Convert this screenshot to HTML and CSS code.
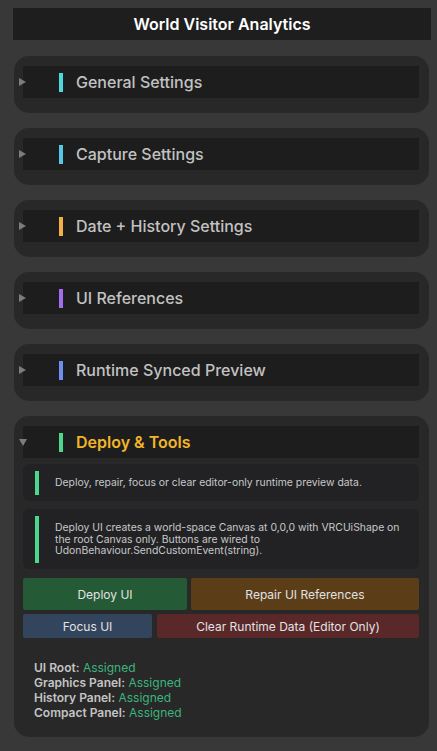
FILE: index.html
```html
<!DOCTYPE html>
<html lang="en">
<head>
    <meta charset="UTF-8">
    <meta name="viewport" content="width=device-width, initial-scale=1.0">
    <title>World Visitor Analytics</title>
    <link rel="stylesheet" href="styles.css">
</head>
<body>
    <div class="inspector">
        <div class="title-bar">World Visitor Analytics</div>

        <div class="foldout">
            <span class="arrow"></span>
            <div class="foldout-header">
                <span class="accent cyan"></span>
                <span class="foldout-title">General Settings</span>
            </div>
        </div>

        <div class="foldout">
            <span class="arrow"></span>
            <div class="foldout-header">
                <span class="accent sky"></span>
                <span class="foldout-title">Capture Settings</span>
            </div>
        </div>

        <div class="foldout">
            <span class="arrow"></span>
            <div class="foldout-header">
                <span class="accent orange"></span>
                <span class="foldout-title">Date + History Settings</span>
            </div>
        </div>

        <div class="foldout">
            <span class="arrow"></span>
            <div class="foldout-header">
                <span class="accent purple"></span>
                <span class="foldout-title">UI References</span>
            </div>
        </div>

        <div class="foldout">
            <span class="arrow"></span>
            <div class="foldout-header">
                <span class="accent blue"></span>
                <span class="foldout-title">Runtime Synced Preview</span>
            </div>
        </div>

        <div class="foldout open">
            <span class="arrow down"></span>
            <div class="foldout-header">
                <span class="accent green"></span>
                <span class="foldout-title active">Deploy &amp; Tools</span>
            </div>

            <div class="help-box first">
                <span class="help-bar"></span>
                <p>Deploy, repair, focus or clear editor-only runtime preview data.</p>
            </div>

            <div class="help-box">
                <span class="help-bar"></span>
                <p>Deploy UI creates a world-space Canvas at 0,0,0 with VRCUiShape on the root Canvas only. Buttons are wired to UdonBehaviour.SendCustomEvent(string).</p>
            </div>

            <div class="button-row big">
                <button class="btn btn-deploy">Deploy UI</button>
                <button class="btn btn-repair">Repair UI References</button>
            </div>
            <div class="button-row small">
                <button class="btn btn-focus">Focus UI</button>
                <button class="btn btn-clear">Clear Runtime Data (Editor Only)</button>
            </div>

            <div class="status">
                <div><b>UI Root:</b> <span class="ok">Assigned</span></div>
                <div><b>Graphics Panel:</b> <span class="ok">Assigned</span></div>
                <div><b>History Panel:</b> <span class="ok">Assigned</span></div>
                <div><b>Compact Panel:</b> <span class="ok">Assigned</span></div>
            </div>
        </div>
    </div>
</body>
</html>
```

FILE: styles.css
```css
body {
    background-color: #383838; /* Unity dark inspector */
    color: #c4c4c4;
    font-family: Inter, "Noto Sans", sans-serif;
    margin: 0;
    padding: 8px 0 0 13px;
}
.inspector {
    width: 418px;
}
.title-bar {
    height: 32px;
    background-color: #1e1e1e;
    color: #ffffff;
    font-size: 16px;
    font-weight: 600;
    display: flex;
    align-items: center;
    justify-content: center;
}
.foldout {
    position: relative;
    margin: 16px 0 0 1px;
    width: 415px;
    box-sizing: border-box;
    padding: 10px 10px 15px 9px;
    background-color: #282828;
    border-radius: 15px;
}
.foldout + .foldout {
    margin-top: 15px;
}
.arrow {
    position: absolute;
    left: 5px;
    top: 22px;
    width: 0;
    height: 0;
    border-top: 4px solid transparent;
    border-bottom: 4px solid transparent;
    border-left: 7px solid #7c7c7c;
}
.arrow.down {
    top: 23px;
    border-left: 4px solid transparent;
    border-right: 4px solid transparent;
    border-top: 7px solid #7c7c7c;
    border-bottom: none;
}
.foldout-header {
    height: 32px;
    background-color: #1d1d1d;
    display: flex;
    align-items: center;
    padding-left: 36px;
}
.accent {
    width: 4px;
    height: 19px;
    margin-right: 13px;
}
.cyan { background-color: #4dd8e0; }
.sky { background-color: #55c8e6; }
.orange { background-color: #f4b042; }
.purple { background-color: #a66cf0; }
.blue { background-color: #6e8ef0; }
.green { background-color: #4cd88a; }
.foldout-title {
    font-size: 16px;
    font-weight: 500;
    color: #c2c2c2;
}
.foldout-title.active {
    color: #f2b52a;
    font-weight: 600;
}
.help-box {
    display: flex;
    align-items: center;
    margin-top: 8px;
    padding: 7px 10px 6px 12px;
    background-color: #222225;
    border-radius: 6px;
}
.help-box.first {
    margin-top: 6px;
}
.help-bar {
    align-self: stretch;
    width: 4px;
    flex-shrink: 0;
    margin-right: 16px;
    background-color: #4cd88a;
}
.help-box p {
    margin: 0;
    font-size: 10.4px;
    line-height: 11.8px;
    color: #c8c8c8;
    padding: 6px 0;
}
.button-row {
    display: flex;
    gap: 4px;
    margin-top: 4px;
}
.button-row.big {
    margin-top: 9px;
}
.btn {
    border: none;
    font-family: Inter, "Noto Sans", sans-serif;
    font-size: 12px;
    color: #e2e2e2;
    padding: 0;
    border-radius: 2px;
}
.big .btn { height: 32px; }
.small .btn { height: 24px; }
.small { gap: 5px; }
.btn-deploy { background-color: #245a35; width: 164px; }
.btn-repair { background-color: #5b3d18; flex: 1; }
.btn-focus { background-color: #33455c; width: 129px; }
.btn-clear { background-color: #5a2829; flex: 1; }
.status {
    margin-top: 22px;
    padding: 0 0 2px 11px;
    font-size: 12px;
    line-height: 15px;
}
.status b {
    font-weight: 600;
    color: #c4c4c4;
}
.ok {
    color: #3cb47e;
}
```
